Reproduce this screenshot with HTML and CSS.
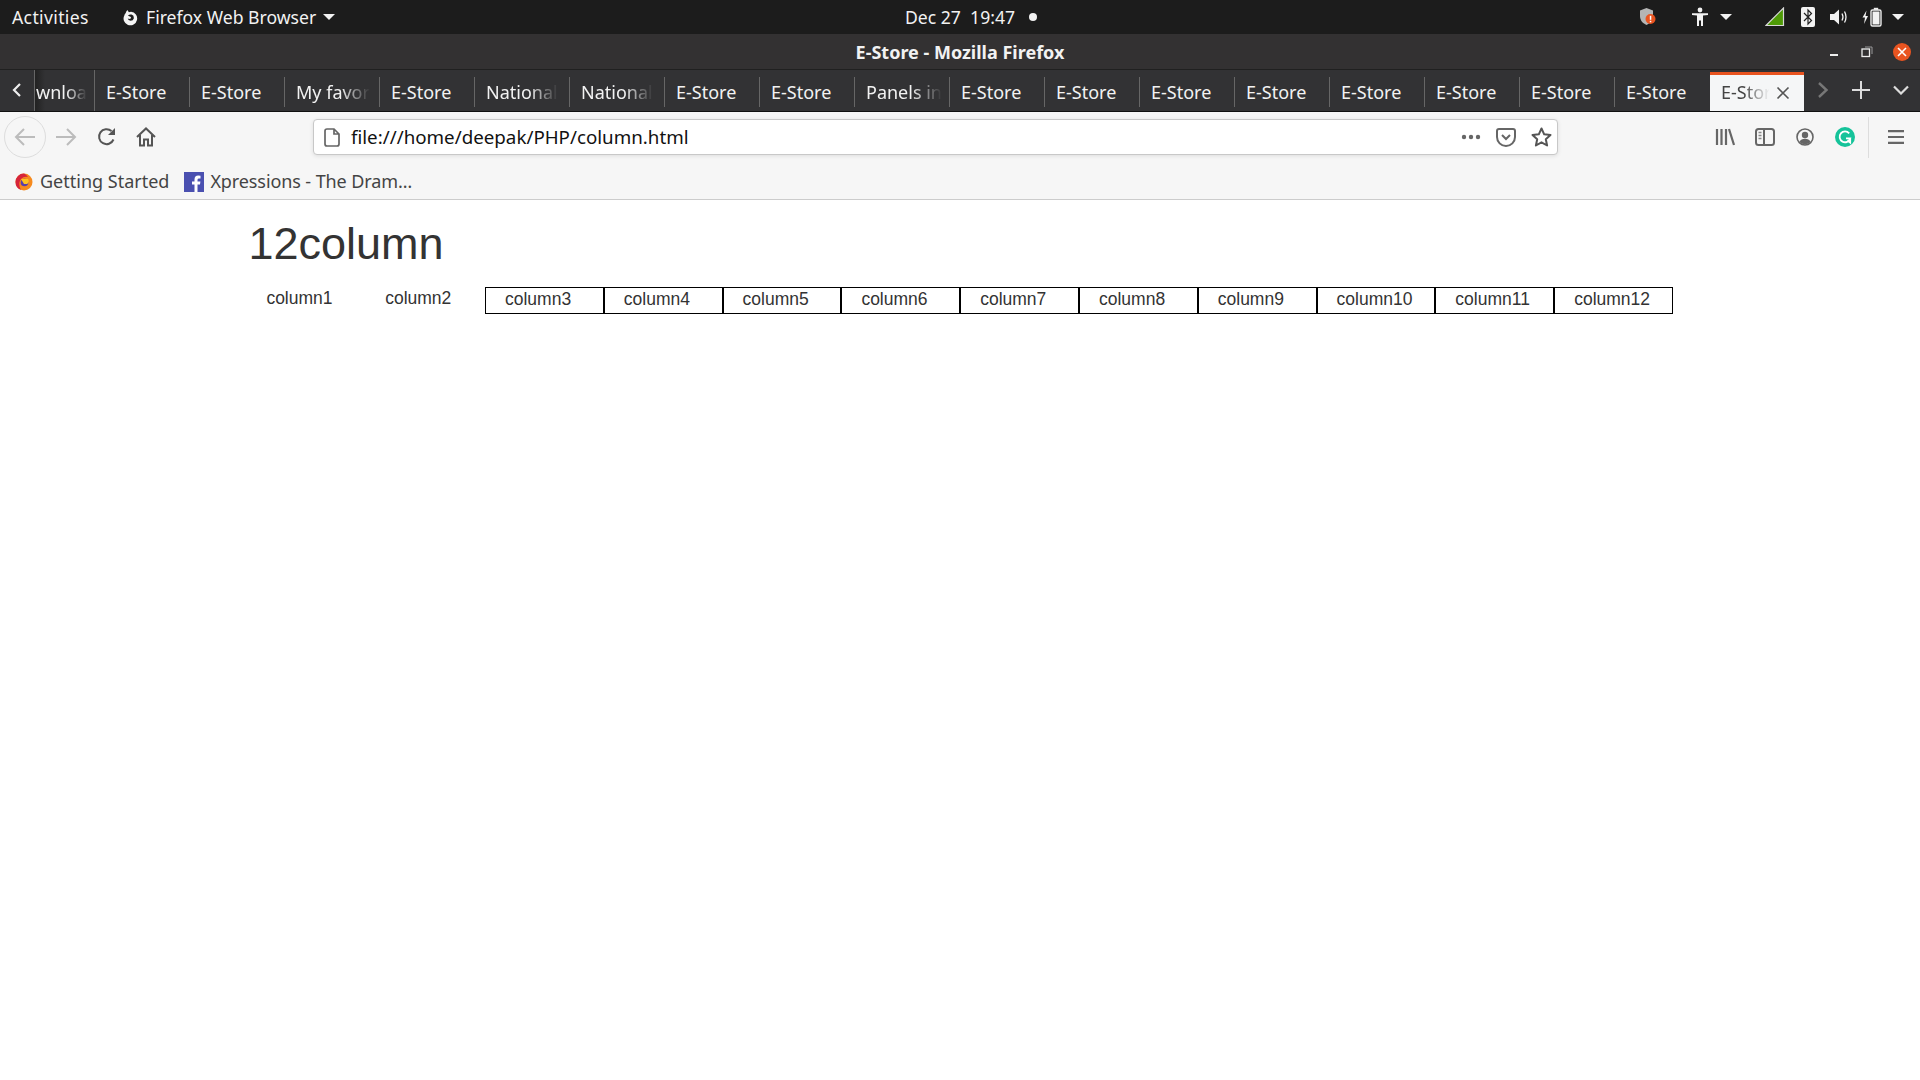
FILE: index.html
```html
<!DOCTYPE html>
<html lang="en">
<head>
    <meta charset="UTF-8">
    <title>E-Store - Mozilla Firefox</title>
    <link rel="stylesheet" href="styles.css">
</head>
<body>

<!-- Gnome top bar -->
<div class="topbar">
    <div class="topbar-left">
        <span class="activities">Activities</span>
        <svg class="app-icon" width="17" height="17" viewBox="0 0 16 16"><path d="M5 1 L6.5 3 Q7.5 2.6 8.5 2.6 A6.4 6.4 0 1 1 2.2 6 Q2.6 4.6 3.4 4 Q3.9 2.2 5 1 Z" fill="#f4f4f4"/><path d="M5.6 6 Q7 4.9 9 5.2 Q11.4 6 11.2 8.6 Q10.6 11 8 11 Q5.8 10.8 5.4 9 Q7 9.8 8.2 9 Q9 8 8 7.2 Q6.8 6.6 5.6 6 Z" fill="#1c1c1c"/></svg>
        <span class="app-name">Firefox Web Browser</span>
        <span class="tri"></span>
    </div>
    <div class="clock">Dec 27&nbsp; 19:47<span class="clock-dot"></span></div>
    <div class="tray">
        <svg class="tray-shield" width="18" height="20" viewBox="0 0 18 20"><path d="M7.5 1 L14 3.5 V9 C14 13.5 11 16.5 7.5 18 C4 16.5 1 13.5 1 9 V3.5 Z" fill="#b5b5b5"/><circle cx="11.5" cy="12" r="5" fill="#e95420"/><rect x="10.8" y="8.8" width="1.5" height="4" fill="#fff"/><rect x="10.8" y="13.8" width="1.5" height="1.5" fill="#fff"/></svg>
        <svg class="tray-person" width="18" height="20" viewBox="0 0 18 20"><circle cx="9" cy="3" r="2.4" fill="#f2f2f2"/><path d="M1 6.2 H17 V8 L12 8.6 V19 H10 V13.5 H8 V19 H6 V8.6 L1 8 Z" fill="#f2f2f2"/></svg>
        <span class="tri tray-tri-a"></span>
        <svg class="tray-signal" width="20" height="20" viewBox="0 0 20 20"><path d="M1 18.5 L18.5 1 V18.5 Z" fill="#4e9a06" stroke="#d8d8d8" stroke-width="1.2"/></svg>
        <svg class="tray-bt" width="14" height="20" viewBox="0 0 14 20"><rect width="14" height="20" rx="2" fill="#f2f2f2"/><path d="M3 6 L10.5 13.5 L7 17 V3 L10.5 6.5 L3 14" fill="none" stroke="#222" stroke-width="1.2"/></svg>
        <svg class="tray-vol" width="20" height="18" viewBox="0 0 20 18"><path d="M1 6 H5 L10 1.5 V16.5 L5 12 H1 Z" fill="#f2f2f2"/><path d="M13 5.5 Q15 9 13 12.5 M15.5 3.5 Q18.5 9 15.5 14.5" fill="none" stroke="#f2f2f2" stroke-width="1.3"/></svg>
        <svg class="tray-bat" width="20" height="20" viewBox="0 0 20 20"><path d="M4.5 3.5 L0.5 10.5 H3 L2 17 L6 9 H3.5 Z" fill="#f2f2f2"/><rect x="9" y="3" width="10" height="16" rx="1.5" fill="none" stroke="#eee" stroke-width="1.4"/><rect x="11.8" y="0.8" width="4.4" height="2" fill="#eee"/><rect x="10.5" y="4.5" width="7" height="13" fill="#f2f2f2"/></svg>
        <span class="tri tray-tri-b"></span>
    </div>
</div>

<!-- Window title -->
<div class="titlebar">
    <span class="title-text">E-Store - Mozilla Firefox</span>
    <div class="window-btns">
        <span class="win-min"></span>
        <svg class="win-max" width="12" height="12" viewBox="0 0 12 12"><rect x="1" y="3" width="7.5" height="7.5" fill="none" stroke="#eee" stroke-width="1.3"/><path d="M4 1 H11 V8" fill="none" stroke="#999"/></svg>
        <span class="win-close"><svg width="10" height="10" viewBox="0 0 10 10"><path d="M1 1 L9 9 M9 1 L1 9" stroke="#fff" stroke-width="1.6"/></svg></span>
    </div>
</div>

<!-- Tab strip -->
<div class="tabstrip">
    <div class="tab-scroll">
        <svg width="10" height="14" viewBox="0 0 10 14"><path d="M8 1 L2 7 L8 13" fill="none" stroke="#eee" stroke-width="2.2"/></svg>
    </div>
    <div class="tab tab-first fade"><span>wnloa</span></div>
    <div class="tab"><span>E-Store</span></div>
    <div class="tab"><span>E-Store</span></div>
    <div class="tab fade"><span>My favor</span></div>
    <div class="tab"><span>E-Store</span></div>
    <div class="tab fade"><span>National</span></div>
    <div class="tab fade"><span>National</span></div>
    <div class="tab"><span>E-Store</span></div>
    <div class="tab"><span>E-Store</span></div>
    <div class="tab fade"><span>Panels in</span></div>
    <div class="tab"><span>E-Store</span></div>
    <div class="tab"><span>E-Store</span></div>
    <div class="tab"><span>E-Store</span></div>
    <div class="tab"><span>E-Store</span></div>
    <div class="tab"><span>E-Store</span></div>
    <div class="tab"><span>E-Store</span></div>
    <div class="tab"><span>E-Store</span></div>
    <div class="tab"><span>E-Store</span></div>
    <div class="tab tab-active">
        <span class="fade-text">E-Stor</span>
        <svg width="14" height="14" viewBox="0 0 14 14"><path d="M1.5 1.5 L12.5 12.5 M12.5 1.5 L1.5 12.5" stroke="#555" stroke-width="1.6"/></svg>
    </div>
    <div class="tab-tools">
        <svg width="12" height="18" viewBox="0 0 12 18"><path d="M2 2 L9.5 9 L2 16" fill="none" stroke="#777" stroke-width="2.4"/></svg>
        <svg width="18" height="18" viewBox="0 0 18 18"><path d="M9 0 V18 M0 9 H18" stroke="#ddd" stroke-width="2"/></svg>
        <svg width="16" height="10" viewBox="0 0 16 10"><path d="M1 1.5 L8 8.5 L15 1.5" fill="none" stroke="#ddd" stroke-width="2.2"/></svg>
    </div>
</div>

<!-- Navigation toolbar -->
<div class="toolbar">
    <div class="nav-btn nav-back">
        <svg width="22" height="20" viewBox="0 0 22 20"><path d="M21 10 H2 M10 2 L2 10 L10 18" fill="none" stroke="#bcbcbc" stroke-width="2"/></svg>
    </div>
    <div class="nav-btn">
        <svg width="22" height="20" viewBox="0 0 22 20"><path d="M1 10 H20 M12 2 L20 10 L12 18" fill="none" stroke="#bcbcbc" stroke-width="2"/></svg>
    </div>
    <div class="nav-btn">
        <svg class="reload-icon" width="20" height="20" viewBox="0 0 20 20"><path d="M16.5 12.5 A7.5 7.5 0 1 1 14.5 4" fill="none" stroke="#555" stroke-width="2"/><path d="M18 1 V8 H11 Z" fill="#555"/></svg>
    </div>
    <div class="nav-btn">
        <svg width="20" height="20" viewBox="0 0 20 20"><path d="M1 10 L10 1.5 L19 10 M4 8 V18.5 H8 V12.5 H12 V18.5 H16 V8" fill="none" stroke="#555" stroke-width="2"/></svg>
    </div>
    <div class="urlbar">
        <svg class="doc-icon" width="16" height="19" viewBox="0 0 16 19"><path d="M3 1 H10 L15 6 V16 Q15 18 13 18 H3 Q1 18 1 16 V3 Q1 1 3 1 Z M10 1 V6 H15" fill="none" stroke="#666" stroke-width="1.7"/></svg>
        <span class="url-text">file:///home/deepak/PHP/column.html</span>
        <div class="url-actions">
            <svg width="20" height="6" viewBox="0 0 20 6"><circle cx="3" cy="3" r="2.2" fill="#666"/><circle cx="10" cy="3" r="2.2" fill="#666"/><circle cx="17" cy="3" r="2.2" fill="#666"/></svg>
            <svg width="20" height="19" viewBox="0 0 20 19"><path d="M1 3 Q1 1 3 1 H17 Q19 1 19 3 V9 A9 9 0 0 1 1 9 Z" fill="none" stroke="#666" stroke-width="2"/><path d="M6 7 L10 11 L14 7" fill="none" stroke="#666" stroke-width="2"/></svg>
            <svg width="21" height="20" viewBox="0 0 21 20"><path d="M10.5 1.5 L13.2 7.3 L19.5 8 L14.8 12.2 L16.1 18.5 L10.5 15.3 L4.9 18.5 L6.2 12.2 L1.5 8 L7.8 7.3 Z" fill="none" stroke="#555" stroke-width="2" stroke-linejoin="round"/></svg>
        </div>
    </div>
    <div class="toolbar-right">
        <div class="nav-btn">
            <svg width="20" height="18" viewBox="0 0 20 18"><path d="M2 1 V17 M6.5 1 V17 M11 1 V17 M14 1 L19 17" fill="none" stroke="#666" stroke-width="2.2"/></svg>
        </div>
        <div class="nav-btn">
            <svg width="20" height="18" viewBox="0 0 20 18"><rect x="1" y="1" width="18" height="16" rx="2.5" fill="none" stroke="#666" stroke-width="2"/><path d="M9 1 V17" stroke="#666" stroke-width="2"/><path d="M3.5 4.5 H6.5 M3.5 7.5 H6.5 M3.5 10.5 H6.5" stroke="#888" stroke-width="1.4"/></svg>
        </div>
        <div class="nav-btn">
            <svg width="18" height="18" viewBox="0 0 18 18"><circle cx="9" cy="9" r="8" fill="none" stroke="#666" stroke-width="1.6"/><circle cx="9" cy="7" r="3.2" fill="#666"/><path d="M3.5 14 Q5 10.8 9 10.8 Q13 10.8 14.5 14 Q12 16.2 9 16.2 Q6 16.2 3.5 14 Z" fill="#666"/></svg>
        </div>
        <div class="nav-btn">
            <svg width="20" height="20" viewBox="0 0 20 20"><circle cx="10" cy="10" r="10" fill="#15c39a"/><path d="M14.2 6.4 A5.4 5.4 0 1 0 15.2 11.4 H11 M12.4 13.2 L15.2 15.5 V11.4" fill="none" stroke="#fff" stroke-width="1.8"/></svg>
        </div>
        <span class="toolbar-sep"></span>
        <div class="nav-btn">
            <svg width="16" height="14" viewBox="0 0 16 14"><path d="M0 1.2 H16 M0 7 H16 M0 12.8 H16" stroke="#666" stroke-width="2.2"/></svg>
        </div>
    </div>
</div>

<!-- Bookmarks -->
<div class="bookmarks">
    <div class="bookmark">
        <svg width="18" height="18" viewBox="0 0 18 18"><circle cx="9" cy="9" r="8.5" fill="#f68a1e"/><path d="M9 .5 A8.5 8.5 0 0 0 .5 9 A8.5 8.5 0 0 0 6 17 Q2.5 11 6 6 Q9 3 13 4 Q11 1 9 .5 Z" fill="#d6243a"/><circle cx="9.5" cy="9.5" r="3.8" fill="#5b3ea8"/><path d="M6 6 H13 Q15 9 12 11 H9 Z" fill="#ffc31f"/></svg>
        <span>Getting Started</span>
    </div>
    <div class="bookmark bookmark-fb">
        <svg width="20" height="20" viewBox="0 0 20 20"><rect width="20" height="20" fill="#4a50b0"/><path d="M13.5 20 V12.5 H16 L16.4 9.5 H13.5 V7.8 Q13.5 6.4 15 6.4 H16.5 V3.7 Q15.4 3.5 14.3 3.5 Q10.5 3.5 10.5 7.4 V9.5 H8 V12.5 H10.5 V20 Z" fill="#fff"/></svg>
        <span>Xpressions - The Dram…</span>
    </div>
</div>

<!-- Page content -->
<div class="page">
    <h1>12column</h1>
    <div class="row">
        <div class="col">column1</div>
        <div class="col">column2</div>
        <div class="col boxed">column3</div>
        <div class="col boxed">column4</div>
        <div class="col boxed">column5</div>
        <div class="col boxed">column6</div>
        <div class="col boxed">column7</div>
        <div class="col boxed">column8</div>
        <div class="col boxed">column9</div>
        <div class="col boxed">column10</div>
        <div class="col boxed">column11</div>
        <div class="col boxed">column12</div>
    </div>
</div>

</body>
</html>
```

FILE: styles.css
```css
html, body {
    height: 100%;
}
body {
    margin: 0;
    padding: 0;
    background-color: white;
    font-family: "Noto Sans", sans-serif;
    overflow: hidden;
}
svg {
    display: block;
    flex-shrink: 0;
}

/* top bar */
.topbar {
    display: flex;
    align-items: center;
    height: 34px;
    background-color: #1c1c1c;
    color: #f2f2f2;
    font-size: 17.6px;
}
.topbar-left {
    display: flex;
    align-items: center;
    width: 905px;
    padding-left: 12px;
    box-sizing: border-box;
}
.activities {
    width: 110px;
    letter-spacing: 0.35px;
}
.app-name {
    margin: 0 7px 0 7px;
}
.tri {
    width: 0;
    height: 0;
    border-left: 6px solid transparent;
    border-right: 6px solid transparent;
    border-top: 6px solid #f2f2f2;
}
.clock {
    display: flex;
    align-items: center;
}
.clock-dot {
    width: 8px;
    height: 8px;
    margin-left: 14px;
    border-radius: 50%;
    background-color: #f2f2f2;
}
.tray {
    display: flex;
    align-items: center;
    margin-left: auto;
    padding-right: 16px;
}
.tray-tri-a {
    margin-left: 11px;
}
.tray-signal {
    margin-left: 33px;
}
.tray-bt {
    margin-left: 16px;
}
.tray-vol {
    margin-left: 14px;
}
.tray-bat {
    margin-left: 13px;
}
.tray-tri-b {
    margin-left: 10px;
}
.tray-person {
    margin-left: 34px;
}

/* title bar */
.titlebar {
    display: flex;
    align-items: center;
    justify-content: center;
    position: relative;
    height: 36px;
    background-color: #333132;
    border-bottom: 1px solid #202020;
    box-sizing: border-box;
    color: #f2f2f2;
    font-size: 18px;
    font-weight: bold;
}
.window-btns {
    display: flex;
    align-items: center;
    position: absolute;
    right: 9px;
    top: 9px;
}
.win-min {
    width: 8px;
    height: 2px;
    margin-top: 5px;
    background-color: #eee;
}
.win-max {
    margin-left: 23px;
}
.win-close {
    display: flex;
    align-items: center;
    justify-content: center;
    width: 18px;
    height: 18px;
    margin-left: 20px;
    border-radius: 50%;
    background-color: #e95420;
}

/* tabs */
.tabstrip {
    display: flex;
    height: 41px;
    background-color: #323234;
    border-bottom: 1px solid #111;
    color: #f2f2f2;
    font-size: 18px;
}
.tab-scroll {
    display: flex;
    align-items: center;
    justify-content: center;
    width: 34px;
    border-right: 1px solid #666;
    padding-bottom: 2px;
    box-sizing: content-box;
}
.tab {
    display: flex;
    align-items: center;
    width: 95px;
    height: 30px;
    margin-top: 7px;
    padding-left: 11px;
    padding-right: 11px;
    box-sizing: border-box;
    border-right: 1px solid #666;
    white-space: nowrap;
}
.tab span {
    display: block;
}
.tab.fade span {
    -webkit-mask-image: linear-gradient(to right, #000 60%, transparent);
    mask-image: linear-gradient(to right, #000 60%, transparent);
}
.tab-first {
    width: 60px;
    height: 41px;
    margin-top: 0;
    padding-left: 1px;
    padding-right: 0;
    background: linear-gradient(to right, #222 0, #323234 10px);
}
.tab-first span {
    margin-top: 3px;
}
.tab:nth-last-child(3) {
    border-right: none;
}
.tab-active {
    width: 94px;
    height: 39px;
    margin-top: 2px;
    padding: 0 14px 3px 11px;
    justify-content: space-between;
    border-right: none;
    border-top: 3px solid #e95420;
    background-color: #f5f6f7;
    color: #444;
}
.tab-active svg {
    margin-top: 3px;
}
.fade-text {
    -webkit-mask-image: linear-gradient(to right, #000 45%, transparent 95%);
    mask-image: linear-gradient(to right, #000 45%, transparent 95%);
}
.tab-tools {
    display: flex;
    align-items: center;
    gap: 23px;
    padding-left: 13px;
    padding-bottom: 2px;
}

/* toolbar */
.toolbar {
    display: flex;
    align-items: center;
    height: 53px;
    padding: 0 4px 3px;
    box-sizing: border-box;
    background-color: #f6f6f6;
}
.nav-btn {
    display: flex;
    align-items: center;
    justify-content: center;
    width: 40px;
    height: 40px;
}
.nav-back {
    width: 40px;
    height: 40px;
    border: 1px solid #ddd;
    border-radius: 50%;
}
.reload-icon {
    margin-left: 2px;
}
.urlbar {
    display: flex;
    align-items: center;
    width: 1245px;
    height: 36px;
    margin-left: 147px;
    padding: 0 5px 0 10px;
    box-sizing: border-box;
    background-color: white;
    border: 1px solid #c8c8c8;
    border-radius: 4px;
    box-shadow: 0 1px 4px rgba(0,0,0,0.1);
}
.url-text {
    margin-left: 11px;
    padding-bottom: 2px;
    font-size: 18.75px;
    color: #111;
}
.url-actions {
    display: flex;
    align-items: center;
    gap: 15px;
    margin-left: auto;
}
.toolbar-right {
    display: flex;
    align-items: center;
    margin-left: auto;
}
.toolbar-sep {
    width: 1px;
    height: 41px;
    margin: 0 7px 0 3px;
    background-color: #ddd;
}

/* bookmarks */
.bookmarks {
    display: flex;
    align-items: center;
    height: 35px;
    padding-left: 15px;
    padding-bottom: 2px;
    box-sizing: border-box;
    background-color: #f6f6f6;
    border-bottom: 1px solid #ccc;
    color: #444;
    font-size: 18px;
}
.bookmark {
    display: flex;
    align-items: center;
    gap: 7px;
}
.bookmark svg {
    margin-top: 2px;
}
.bookmark-fb {
    gap: 6px;
    margin-left: 15px;
    letter-spacing: -0.1px;
}

/* page */
.page {
    width: 1426px;
    margin-left: 247.4px;
    color: #333;
    font-family: "Liberation Sans", Arial, sans-serif;
    font-size: 17.5px;
    line-height: 22px;
}
h1 {
    margin: 19px 0 22px 1px;
    font-size: 45px;
    font-weight: 500;
    line-height: 50px;
}
.row {
    display: grid;
    grid-template-columns: repeat(12, 118.8px);
    margin-top: -4px;
}
.col {
    padding: 0 19px;
    box-sizing: border-box;
    height: 27px;
}
.boxed {
    border: 1px solid black;
}
```
